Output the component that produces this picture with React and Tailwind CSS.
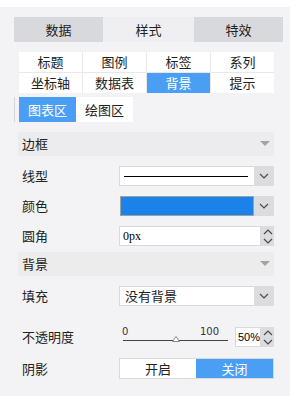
import React from 'react';

const Chevron = ({ up = false }) => (
  <svg width="10" height="6" viewBox="0 0 10 6" className="block">
    <polyline
      points={up ? '1,5 5,1 9,5' : '1,1 5,5 9,1'}
      fill="none"
      stroke="#4a4a4a"
      strokeWidth="1.2"
    />
  </svg>
);

const DropBtn = () => (
  <div className="w-[20px] h-full bg-[#dcdcdf] flex items-center justify-center">
    <Chevron />
  </div>
);

const Spinner = () => (
  <div className="w-[13px] h-full bg-[#dcdcdf] flex flex-col items-center justify-center gap-[3px]">
    <Chevron up />
    <Chevron />
  </div>
);

const Section = ({ title }) => (
  <div className="ml-[18px] w-[256px] h-[24px] bg-[#ececec] flex items-center justify-between pl-[4px] pr-[4px]">
    <span className="text-[13px] text-[#222]">{title}</span>
    <svg width="10" height="6" viewBox="0 0 10 6">
      <polygon points="0,0 10,0 5,5" fill="#a3a3a3" />
    </svg>
  </div>
);

const Row = ({ label, children, className = '' }) => (
  <div className={`flex items-center h-[20px] ${className}`}>
    <span className="w-[119px] shrink-0 pl-[22px] text-[13px] text-[#222]">{label}</span>
    <div className="w-[155px] h-full flex">{children}</div>
  </div>
);

export default function App() {
  const subTabs = ['标题', '图例', '标签', '系列', '坐标轴', '数据表', '背景', '提示'];

  return (
    <div className="w-[290px] h-[396px] bg-[#f3f3f5] overflow-hidden font-['Noto_Sans_CJK_SC',sans-serif]">
      <div className="h-[7px] bg-white" />

      {/* Top tabs */}
      <div className="mt-[10px] ml-[14px] w-[269px] h-[25px] flex text-[13px] text-[#222]">
        <div className="w-[89px] bg-[#d8d9dc] flex items-center justify-center">数据</div>
        <div className="w-[91px] bg-[#efeff1] flex items-center justify-center">样式</div>
        <div className="w-[89px] bg-[#d8d9dc] flex items-center justify-center">特效</div>
      </div>

      {/* Sub tabs */}
      <div className="mt-[10px] ml-[19px] w-[255px] grid grid-cols-4 gap-px bg-[#e8e8ea]">
        {subTabs.map((t) => (
          <div
            key={t}
            className={`h-[20px] flex items-center justify-center text-[13px] ${
              t === '背景' ? 'bg-[#4a9ff5] text-white' : 'bg-white text-[#222]'
            }`}
          >
            {t}
          </div>
        ))}
      </div>

      <div className="mt-[4px] ml-[14px] h-[25px] border-l border-[#d6d6d6] pl-[4px] flex text-[13px]">
        <div className="w-[57px] bg-[#4a9ff5] text-white flex items-center justify-center">图表区</div>
        <div className="w-[57px] bg-white text-[#222] flex items-center justify-center">绘图区</div>
      </div>

      <div className="mt-[10px]">
        <Section title="边框" />
      </div>

      <Row label="线型" className="mt-[10px]">
        <div className="flex-1 bg-white border border-[#d9d9d9] border-r-0 flex items-center px-[4px]">
          <div className="h-px w-full bg-black mr-[2px]" />
        </div>
        <DropBtn />
      </Row>

      <Row label="颜色" className="mt-[10px]">
        <div className="flex-1 bg-[#1a82e8] border border-[#a0a0a0] ml-[1px]" />
        <DropBtn />
      </Row>

      <Row label="圆角" className="mt-[10px]">
        <div className="flex-1 bg-white border border-[#d9d9d9] flex items-center pl-[3px] text-[12px] text-black font-['Liberation_Serif',serif]">
          0px
        </div>
        <Spinner />
      </Row>

      <div className="mt-[6px]">
        <Section title="背景" />
      </div>

      <Row label="填充" className="mt-[10px]">
        <div className="flex-1 bg-white border border-[#d9d9d9] border-r-0 flex items-center pl-[5px] text-[13px] text-[#222]">
          没有背景
        </div>
        <DropBtn />
      </Row>

      <Row label="不透明度" className="mt-[21px]">
        <div className="w-[112px] h-full relative">
          <span className="absolute left-[3px] top-[0px] text-[10px] leading-none text-[#333] font-['DejaVu_Sans',sans-serif]">0</span>
          <span className="absolute left-[81px] top-[0px] text-[10px] leading-none text-[#333] font-['DejaVu_Sans',sans-serif]">100</span>
          <div className="absolute left-[4px] right-[3px] top-[13px] h-px bg-[#444]" />
          <svg className="absolute left-[53px] top-[9px]" width="8" height="6" viewBox="0 0 8 6">
            <polygon points="4,0.5 7.5,5.5 0.5,5.5" fill="white" stroke="#888" strokeWidth="1" />
          </svg>
        </div>
        <div className="ml-[4px] w-[26px] h-full bg-white border border-[#d9d9d9] flex items-center pl-[2px] text-[11px] text-black font-['Liberation_Sans',sans-serif]">
          50%
        </div>
        <Spinner />
      </Row>

      <Row label="阴影" className="mt-[11px] h-[21px]">
        <div className="flex-1 flex border border-[#d9d9d9] bg-white text-[13px]">
          <div className="w-[76px] flex items-center justify-center text-[#222]">开启</div>
          <div className="flex-1 bg-[#4a9ff5] text-white flex items-center justify-center">关闭</div>
        </div>
      </Row>
    </div>
  );
}
